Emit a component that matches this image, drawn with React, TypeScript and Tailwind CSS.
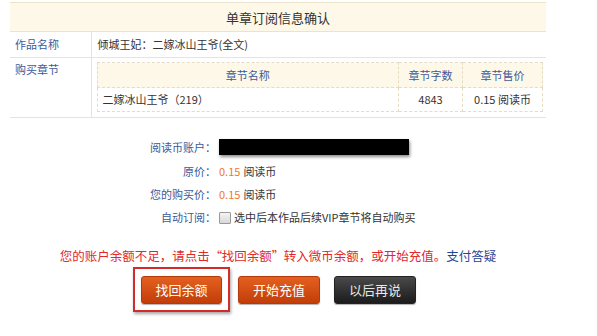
import React from 'react';

const font = { fontFamily: '"Noto Sans CJK SC", "Liberation Sans", sans-serif' };

function FormRow({ label, children, h = 'h-[23px]' }: { label: string; children: React.ReactNode; h?: string }) {
  return (
    <div className={`flex items-center ${h}`}>
      <div className="w-[216px] shrink-0 text-right text-[11px] text-[#3b5a9a]">{label}：</div>
      <div className="flex items-center pl-[3px] text-[11px] text-[#333]">{children}</div>
    </div>
  );
}

export default function App() {
  return (
    <div lang="zh-CN" className="w-[597px] h-[336px] bg-white overflow-hidden" style={font}>
      {/* order details */}
      <div className="ml-[10px] mt-[2px] w-[536px]">
        <table className="w-full border-collapse text-[11px]">
          <tbody>
            <tr className="h-[29px] bg-[#fdf8e8] border-t border-b border-[#ece3cc]">
              <td colSpan={2} className="text-center text-[13px] text-[#333] pt-[1px]">单章订阅信息确认</td>
            </tr>
            <tr className="h-[26px] border-b border-[#ece3cc]">
              <td className="w-[81px] pl-[5px] text-[#3b5a9a] border-r border-[#ece3cc]">作品名称</td>
              <td className="pl-[6px] text-[#333]">倾城王妃：二嫁冰山王爷(全文)</td>
            </tr>
            <tr className="h-[58px] border-b border-[#ece3cc]">
              <td className="w-[81px] pl-[5px] align-top pt-[3px] text-[#3b5a9a] border-r border-[#ece3cc]">购买章节</td>
              <td className="pl-[5px] pr-[3px] pt-[4px] pb-[5px] align-top">
                <table className="w-full border-collapse">
                  <tbody>
                    <tr className="h-[25px] bg-[#fdf8e8]">
                      <td className="border border-dashed border-[#e5dcc3] text-center text-[#3b5a9a]">章节名称</td>
                      <td className="w-[64px] border border-dashed border-[#e5dcc3] text-center text-[#3b5a9a]">章节字数</td>
                      <td className="w-[80px] border border-dashed border-[#e5dcc3] text-center text-[#3b5a9a]">章节售价</td>
                    </tr>
                    <tr className="h-[24px]">
                      <td className="border border-dashed border-[#e5dcc3] pl-[5px] text-[#333]">二嫁冰山王爷（219）</td>
                      <td className="border border-dashed border-[#e5dcc3] text-center text-[#333]">4843</td>
                      <td className="border border-dashed border-[#e5dcc3] text-center text-[#333]">0.15 阅读币</td>
                    </tr>
                  </tbody>
                </table>
              </td>
            </tr>
          </tbody>
        </table>
      </div>

      {/* account info */}
      <div className="mt-[16px] flex flex-col">
        <FormRow label="阅读币账户" h="h-[26px]">
          <div className="w-[190px] h-[16px] bg-black shadow-[1px_2px_3px_rgba(0,0,0,0.45)]" />
        </FormRow>
        <FormRow label="原价">
          <span className="text-[#f0782a] mr-[3px]">0.15</span>阅读币
        </FormRow>
        <FormRow label="您的购买价">
          <span className="text-[#f0782a] mr-[3px]">0.15</span>阅读币
        </FormRow>
        <FormRow label="自动订阅">
          <span className="w-[12px] h-[12px] mr-[3px] border border-[#999] rounded-[1px] bg-gradient-to-b from-[#f4f4f4] to-[#d8d8d8]" />
          选中后本作品后续VIP章节将自动购买
        </FormRow>
      </div>

      {/* notice */}
      <div className="w-[556px] mt-[18px] text-center text-[12.5px] leading-[18px]">
        <span className="text-[#e02a2a]">
          您的账户余额不足，请点击<span className="inline-block w-[12px] text-right">“</span>找回余额<span className="inline-block w-[12px] text-left">”</span>转入微币余额，或开始充值。
        </span>
        <span className="text-[#1f4596]">支付答疑</span>
      </div>

      {/* actions */}
      <div className="flex items-center mt-[2px] pl-[133px]">
        <div className="w-[97px] h-[45px] border-2 border-[#d42a2a] shadow-[1px_2px_3px_rgba(0,0,0,0.35)] flex items-center justify-center">
          <button className="w-[81px] h-[28px] rounded-[3px] bg-gradient-to-b from-[#e4601f] to-[#c23d08] border border-[#b33a0c] text-white text-[13px] shadow-[0_1px_1px_rgba(0,0,0,0.3)]">
            找回余额
          </button>
        </div>
        <button className="ml-[8px] w-[82px] h-[28px] rounded-[3px] bg-gradient-to-b from-[#e4601f] to-[#c23d08] border border-[#b33a0c] text-white text-[13px] shadow-[0_1px_1px_rgba(0,0,0,0.3)]">
          开始充值
        </button>
        <button className="ml-[14px] w-[82px] h-[28px] rounded-[3px] bg-gradient-to-b from-[#4a4a4a] to-[#1c1c1c] border border-[#222] text-[#e8e8e8] text-[13px] shadow-[0_1px_1px_rgba(0,0,0,0.3)]">
          以后再说
        </button>
      </div>
    </div>
  );
}
